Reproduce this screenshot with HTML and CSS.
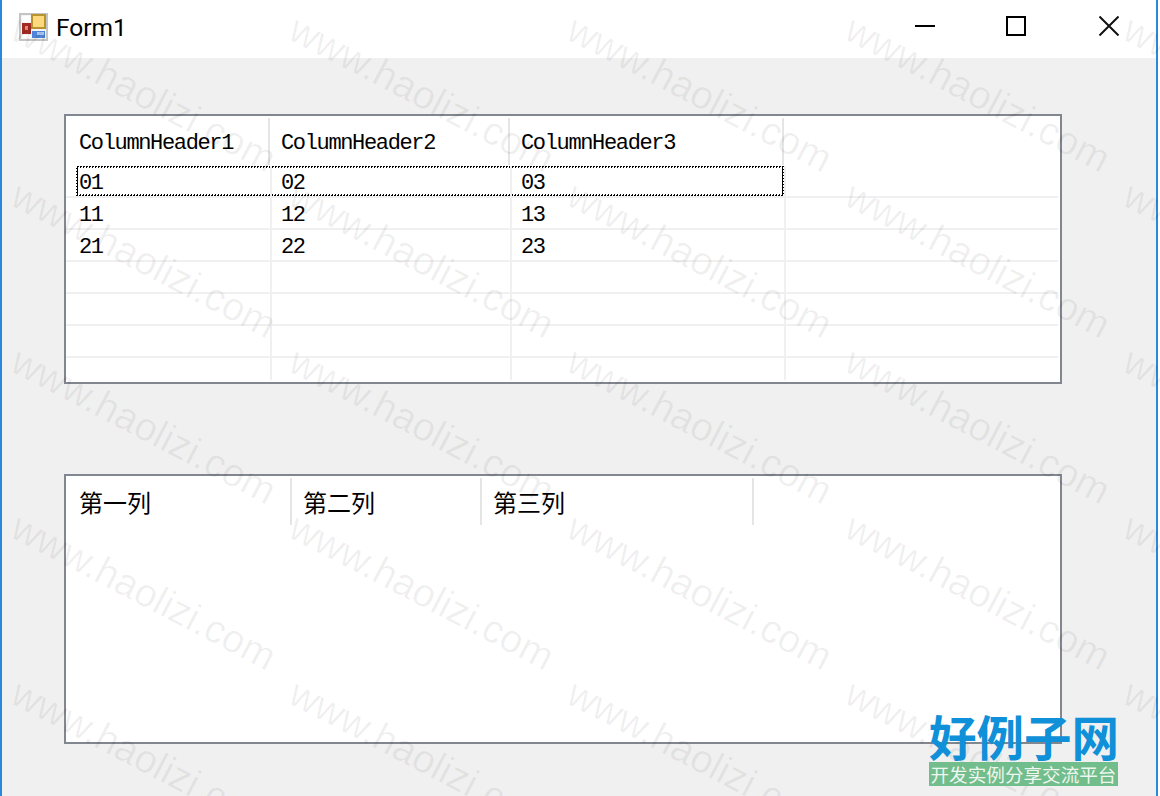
FILE: index.html
```html
<!DOCTYPE html>
<html lang="en">
<head>
  <meta charset="UTF-8">
  <title>Form1</title>
  <link rel="stylesheet" href="styles.css">
</head>
<body>

  <div class="window">
    <div class="titlebar">
      <svg class="app-icon" width="29" height="28" viewBox="0 0 29 28">
        <rect x="1" y="1" width="27" height="26" fill="#f4f4f4" stroke="#c4c4c4" stroke-width="2"/>
        <rect x="3" y="3" width="9" height="6" fill="#fff"/>
        <rect x="12" y="1" width="15" height="15" fill="#b8922c"/>
        <rect x="14" y="3" width="11" height="11" fill="#fcd97c"/>
        <rect x="3" y="10" width="9" height="11" fill="#a32a22"/>
        <rect x="6" y="13" width="3" height="4" fill="#e88a80"/>
        <rect x="13" y="18" width="13" height="7" fill="#4f84d8"/>
        <rect x="18" y="19" width="7" height="3" fill="#a9c8f2"/>
        <rect x="3" y="22" width="4" height="3" fill="#fff"/>
        <rect x="8" y="22" width="4" height="3" fill="#fff"/>
      </svg>
      <span class="title">Form1</span>
      <div class="controls">
        <button class="ctl"><svg width="20" height="20" viewBox="0 0 20 20"><path d="M0 10h20" stroke="#000" stroke-width="2"/></svg></button>
        <button class="ctl"><svg width="20" height="20" viewBox="0 0 20 20"><rect x="1" y="1" width="18" height="18" fill="none" stroke="#000" stroke-width="2"/></svg></button>
        <button class="ctl"><svg width="20" height="20" viewBox="0 0 20 20"><path d="M0.5 0.5L19.5 19.5M19.5 0.5L0.5 19.5" stroke="#111" stroke-width="2"/></svg></button>
      </div>
    </div>

    <div class="form">
      <div class="listview">
        <div class="head">
          <div class="hcell">ColumnHeader1</div>
          <div class="hcell">ColumnHeader2</div>
          <div class="hcell">ColumnHeader3</div>
        </div>
        <div class="row focused"><div class="cell">01</div><div class="cell">02</div><div class="cell">03</div></div>
        <div class="row"><div class="cell">11</div><div class="cell">12</div><div class="cell">13</div></div>
        <div class="row"><div class="cell">21</div><div class="cell">22</div><div class="cell">23</div></div>
        <div class="row"><div class="cell"></div><div class="cell"></div><div class="cell"></div></div>
        <div class="row"><div class="cell"></div><div class="cell"></div><div class="cell"></div></div>
        <div class="row"><div class="cell"></div><div class="cell"></div><div class="cell"></div></div>
        <div class="row last"><div class="cell"></div><div class="cell"></div><div class="cell"></div></div>
      </div>

      <div class="listview second">
        <div class="head cn">
          <div class="hcell">第一列</div>
          <div class="hcell">第二列</div>
          <div class="hcell">第三列</div>
        </div>
      </div>
    </div>
  </div>

  <div class="watermark">
    <span>www.haolizi.com</span><span>www.haolizi.com</span><span>www.haolizi.com</span><span>www.haolizi.com</span><span>www.haolizi.com</span>
    <span>www.haolizi.com</span><span>www.haolizi.com</span><span>www.haolizi.com</span><span>www.haolizi.com</span><span>www.haolizi.com</span>
    <span>www.haolizi.com</span><span>www.haolizi.com</span><span>www.haolizi.com</span><span>www.haolizi.com</span><span>www.haolizi.com</span>
    <span>www.haolizi.com</span><span>www.haolizi.com</span><span>www.haolizi.com</span><span>www.haolizi.com</span><span>www.haolizi.com</span>
    <span>www.haolizi.com</span><span>www.haolizi.com</span><span>www.haolizi.com</span><span>www.haolizi.com</span><span>www.haolizi.com</span>
  </div>

  <div class="logo">
    <div class="logo-name">好例子网</div>
    <div class="logo-tag">开发实例分享交流平台</div>
  </div>

</body>
</html>
```

FILE: styles.css
```css
html, body {
  margin: 0;
  height: 796px;
  overflow: hidden;
  background: #fff;
}

body {
  position: relative;
  width: 1160px;
}

.window {
  width: 1154px;
  height: 796px;
  border-left: 2px solid #2b87dc;
  border-right: 2px solid #2b87dc;
  background: #f0f0f0;
}

/* title bar */
.titlebar {
  height: 58px;
  background: #fff;
  display: flex;
  align-items: center;
  padding-left: 17px;
}

.app-icon {
  margin-right: 8px;
  margin-top: -4px;
}

.title {
  font-family: Roboto, sans-serif;
  font-size: 24.5px;
  color: #000;
  margin-top: -3px;
}

.controls {
  margin-left: auto;
  display: flex;
  margin-right: 1px;
  margin-top: -7px;
}

.ctl {
  width: 92px;
  height: 40px;
  border: none;
  padding: 0;
  background: none;
  display: flex;
  align-items: center;
  justify-content: center;
}

.ctl:nth-child(2) {
  padding-right: 2px;
}

/* form */
.form {
  padding: 56px 0 0 62px;
}

.listview {
  width: 994px;
  height: 266px;
  border: 2px solid #82868f;
  background: #fff;
  font-family: "Liberation Mono", "Noto Sans CJK SC", monospace;
  font-size: 22px;
  letter-spacing: -1.35px;
  color: #000;
  overflow: hidden;
}

.second {
  margin-top: 90px;
}

.head {
  height: 50px;
  display: grid;
  grid-template-columns: 204px 240px 274px;
}

.hcell {
  margin-top: 2px;
  padding-left: 11px;
  border-right: 2px solid #e5e5e5;
  line-height: 51px;
  height: 47px;
}

.hcell:first-child {
  padding-left: 13px;
}

.cn {
  grid-template-columns: 226px 190px 272px;
}

.cn .hcell {
  font-family: "Noto Sans CJK SC", sans-serif;
  font-size: 24px;
  letter-spacing: 0;
  line-height: 47px;
}

.cn .hcell + .hcell {
  padding-left: 11px;
}

.row {
  height: 30px;
  width: 992px;
  display: grid;
  grid-template-columns: 206px 240px 274px;
  border-bottom: 2px solid #f0f0f0;
  position: relative;
  z-index: 0;
}

.row.last {
  border-bottom: none;
  height: 22px;
}

.cell {
  padding-left: 9px;
  line-height: 35px;
  border-right: 2px solid #f0f0f0;
}

.cell:first-child {
  padding-left: 13px;
}

/* dotted focus rectangle */
.focused::before {
  content: "";
  position: absolute;
  z-index: -1;
  left: 10px;
  top: 0;
  width: 704px;
  height: 26px;
  border: 2px solid transparent;
  background: linear-gradient(#fff, #fff) padding-box,
    repeating-conic-gradient(#000 0 25%, #fff 0 50%) 0 0 / 3px 3px border-box;
}

/* watermark over everything */
.watermark {
  position: absolute;
  inset: 0;
  overflow: hidden;
  pointer-events: none;
  display: grid;
  grid-template-columns: repeat(5, 278px);
  grid-auto-rows: 166px;
  padding: 6px 0 0 25px;
  font-family: "Liberation Sans", sans-serif;
  font-size: 39.5px;
  color: rgba(0, 0, 0, 0.06);
}

.watermark span {
  white-space: nowrap;
  transform-origin: left top;
  transform: rotate(27.6deg);
}

/* site logo, bottom right */
.logo {
  position: absolute;
  left: 929px;
  top: 710px;
  width: 189px;
}

.logo-name {
  font-family: "Noto Sans CJK SC", sans-serif;
  font-weight: 700;
  font-size: 47.5px;
  line-height: 52px;
  color: #0f90d8;
  white-space: nowrap;
}

.logo-tag {
  height: 24px;
  background: #72bd8c;
  color: #eef6ef;
  font-family: "Noto Sans CJK SC", sans-serif;
  font-size: 18.6px;
  line-height: 24px;
  white-space: nowrap;
  text-align: center;
}
```
